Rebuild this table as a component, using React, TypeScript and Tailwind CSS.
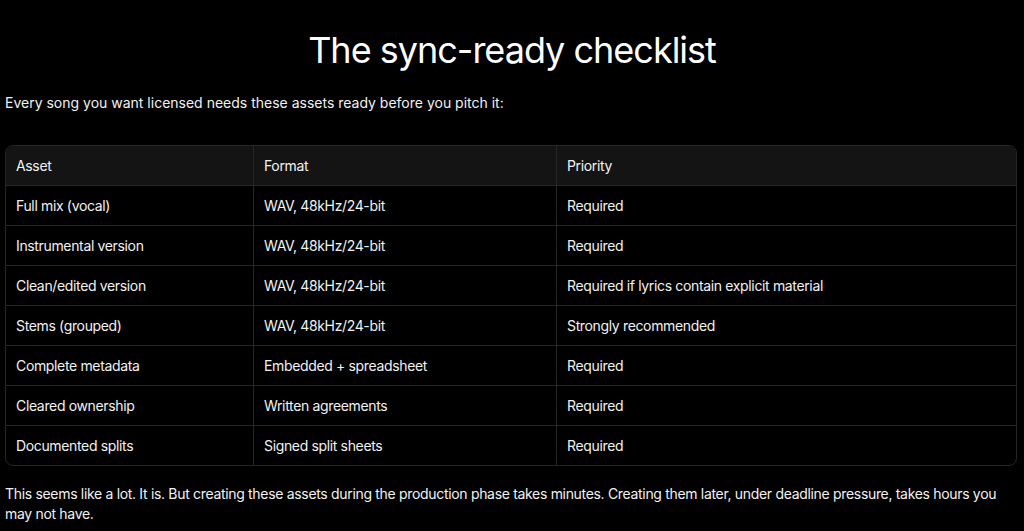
import React from "react";

const rows: [string, string, string][] = [
  ["Full mix (vocal)", "WAV, 48kHz/24-bit", "Required"],
  ["Instrumental version", "WAV, 48kHz/24-bit", "Required"],
  ["Clean/edited version", "WAV, 48kHz/24-bit", "Required if lyrics contain explicit material"],
  ["Stems (grouped)", "WAV, 48kHz/24-bit", "Strongly recommended"],
  ["Complete metadata", "Embedded + spreadsheet", "Required"],
  ["Cleared ownership", "Written agreements", "Required"],
  ["Documented splits", "Signed split sheets", "Required"],
];

export default function App() {
  return (
    <div className="min-h-[531px] w-[1024px] bg-black text-[#f2f2f2] px-[5px]" style={{ fontFamily: "Inter, 'Noto Sans', sans-serif" }}>
      <h1 className="pt-[28px] text-center text-[36px] leading-[44px] font-normal tracking-[-1px] text-white">
        The sync-ready checklist
      </h1>
      <p className="mt-[21px] text-[14px] leading-[20px]">
        Every song you want licensed needs these assets ready before you pitch it:
      </p>
      <div className="mt-[32px] mr-[2px] overflow-hidden rounded-[8px] border border-[#262626] text-[14px] tracking-[-0.35px]">
        <div className="grid grid-cols-[248px_303px_1fr] bg-[#141414]">
          <div className="h-[39px] flex items-center px-[10px] border-r border-[#262626]">Asset</div>
          <div className="h-[39px] flex items-center px-[10px] border-r border-[#262626]">Format</div>
          <div className="h-[39px] flex items-center px-[10px]">Priority</div>
        </div>
        {rows.map((r, i) => (
          <div key={i} className="grid grid-cols-[248px_303px_1fr] border-t border-[#262626]">
            <div className="h-[39px] flex items-center px-[10px] border-r border-[#262626]">{r[0]}</div>
            <div className="h-[39px] flex items-center px-[10px] border-r border-[#262626]">{r[1]}</div>
            <div className="h-[39px] flex items-center px-[10px]">{r[2]}</div>
          </div>
        ))}
      </div>
      <p className="mt-[18px] text-[14px] leading-[20px] pr-[10px] tracking-[-0.32px]">
        This seems like a lot. It is. But creating these assets during the production phase takes minutes. Creating them later, under deadline pressure, takes hours you may not have.
      </p>
    </div>
  );
}
